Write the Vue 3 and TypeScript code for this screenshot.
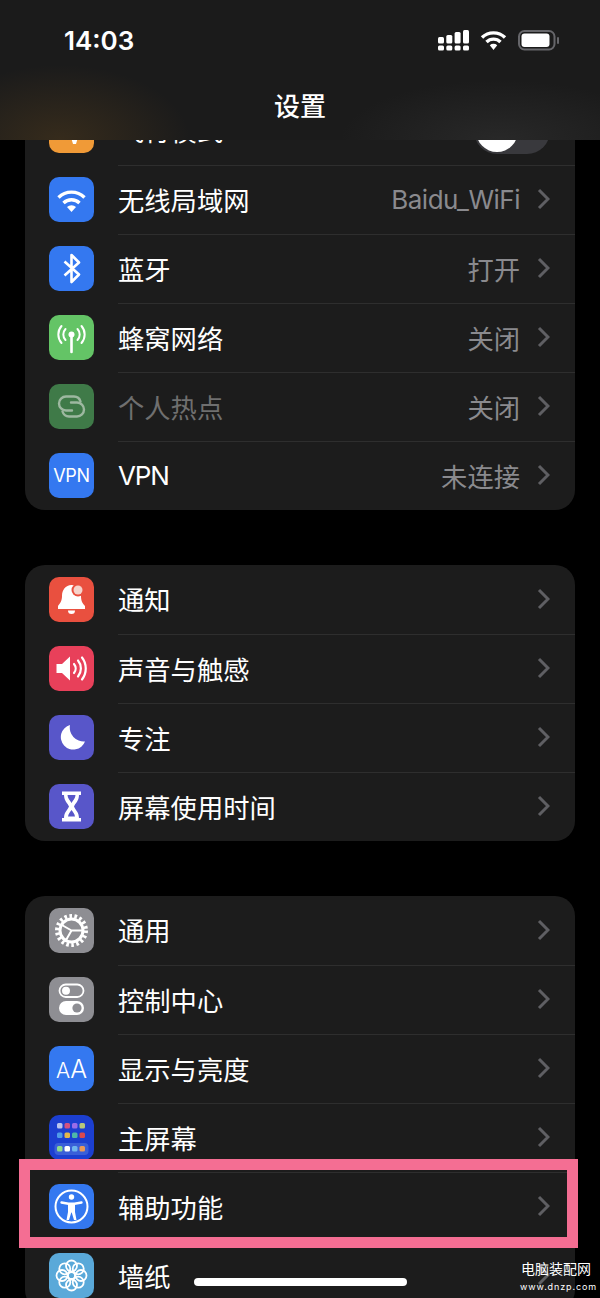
<script setup lang="ts">
interface Row {
  label: string;
  icon: string;
  color: string;
  value?: string;
  dim?: boolean;
  toggle?: boolean;
}

const groups: Row[][] = [
  [
    { label: '飞行模式', icon: 'plane', color: '#f09a37', toggle: true },
    { label: '无线局域网', icon: 'wifi', color: '#3478f0', value: 'Baidu_WiFi' },
    { label: '蓝牙', icon: 'bluetooth', color: '#3478f0', value: '打开' },
    { label: '蜂窝网络', icon: 'cell', color: '#64c466', value: '关闭' },
    { label: '个人热点', icon: 'hotspot', color: '#3f7a48', value: '关闭', dim: true },
    { label: 'VPN', icon: 'vpn', color: '#3478f0', value: '未连接' },
  ],
  [
    { label: '通知', icon: 'bell', color: '#e9503f' },
    { label: '声音与触感', icon: 'sound', color: '#e8405a' },
    { label: '专注', icon: 'moon', color: '#5856c9' },
    { label: '屏幕使用时间', icon: 'hourglass', color: '#5856c9' },
  ],
  [
    { label: '通用', icon: 'gear', color: '#8e8e93' },
    { label: '控制中心', icon: 'switches', color: '#8e8e93' },
    { label: '显示与亮度', icon: 'aa', color: '#3478f0' },
    { label: '主屏幕', icon: 'home', color: '#1c3fd0' },
    { label: '辅助功能', icon: 'access', color: '#3478f0' },
    { label: '墙纸', icon: 'flower', color: '#5aa9d9' },
  ],
];

const homeDots = [
  ['#b9c4ee', '#d2527f', '#9a6ce8', '#b7c77a'],
  ['#4f9be8', '#e2b64c', '#4fb7a8', '#d9494f'],
];
const dockDots = ['#8fdc8a', '#ffffff', '#6fb5ee', '#eb9a5a'];
const petals = [0, 45, 90, 135, 180, 225, 270, 315];

const isLatin = (text: string) => /^[A-Za-z_]+$/.test(text);
</script>

<template>
  <div class="page">
    <header class="nav">
      <div class="status">
        <span class="time">14:03</span>
        <div class="status-icons">
          <svg width="32" height="21" viewBox="0 0 32 21" fill="#fff">
            <rect x="1" y="7" width="6" height="6.500" rx="1.500" />
            <rect x="1" y="15.500" width="6" height="5" rx="1.500" />
            <rect x="9.300" y="5" width="6" height="8.500" rx="1.500" />
            <rect x="9.300" y="15.500" width="6" height="5" rx="1.500" />
            <rect x="17.600" y="2" width="6" height="11.500" rx="1.500" />
            <rect x="17.600" y="15.500" width="6" height="5" rx="1.500" />
            <rect x="26" y="0" width="6" height="13.500" rx="1.500" />
            <rect x="26" y="15.500" width="6" height="5" rx="1.500" />
          </svg>
          <svg width="27" height="21" viewBox="0 0 27 21">
            <path d="M2 7.500a16.500 16.500 0 0 1 23 0M6.500 12a10 10 0 0 1 14 0" fill="none" stroke="#fff" stroke-width="3.400" />
            <path d="M9.800 15.200a5.400 5.400 0 0 1 7.400 0L13.500 20z" fill="#fff" />
          </svg>
          <svg width="41" height="21" viewBox="0 0 41 21">
            <rect x="1" y="1" width="35.500" height="18.500" rx="5.500" fill="none" stroke="#66666a" stroke-width="2" />
            <rect x="3.500" y="3.500" width="28" height="13.500" rx="3" fill="#fff" />
            <rect x="39" y="7" width="2" height="7" rx="1" fill="#66666a" />
          </svg>
        </div>
      </div>
      <h1 class="title">设置</h1>
    </header>

    <main class="list">
      <section v-for="(group, g) in groups" :key="g" class="card">
        <div v-for="(row, i) in group" :key="row.label" class="row">
          <span class="icon" :style="{ background: row.color }">
            <svg v-if="row.icon !== 'vpn' && row.icon !== 'aa'" width="45" height="45" viewBox="0 0 45 45">
              <path v-if="row.icon === 'plane'" d="M24 10l-3 10-8-1-2-3-2 1 2 6-2 6 2 1 2-3 8-1 3 10h3l3-10 6-1v-4l-6-1-3-10z" fill="#fff" />

              <template v-else-if="row.icon === 'wifi'">
                <path d="M9.500 20.500a18.500 18.500 0 0 1 26 0M14.500 26a11.500 11.500 0 0 1 16 0" fill="none" stroke="#fff" stroke-width="3.400" />
                <path d="M18 30a6.500 6.500 0 0 1 9 0l-4.500 5z" fill="#fff" />
              </template>

              <path
                v-else-if="row.icon === 'bluetooth'"
                d="M15.500 15.500 L30 28.500 L22.500 36 V9 L30 16.500 L15.500 29.500"
                fill="none"
                stroke="#fff"
                stroke-width="2.600"
                stroke-linejoin="round"
              />

              <template v-else-if="row.icon === 'cell'">
                <circle cx="22.500" cy="19.500" r="3" fill="#fff" />
                <path d="M22.500 20v17" stroke="#fff" stroke-width="2.600" stroke-linecap="round" />
                <path
                  d="M16.500 14a8 8 0 0 0 0 11M28.500 14a8 8 0 0 1 0 11M12.500 11a13 13 0 0 0 0 17M32.500 11a13 13 0 0 1 0 17"
                  fill="none"
                  stroke="#fff"
                  stroke-width="2"
                  stroke-linecap="round"
                />
              </template>

              <g v-else-if="row.icon === 'hotspot'" fill="none" stroke="#9db8a0" stroke-width="2.400" stroke-linecap="round">
                <path d="M23 26.500h-6a7 7 0 0 1 0-14h8a7 7 0 0 1 6.500 5" />
                <path d="M22 18.500h6a7 7 0 0 1 0 14h-8a7 7 0 0 1-6.500-5" />
              </g>

              <template v-else-if="row.icon === 'bell'">
                <path d="M22.500 8c-6 0-9.500 5-9.500 11 0 5-2 7.500-4 10v3h27v-3c-2.500-2.500-4-5-4-10 0-6-3.500-11-9.500-11z" fill="#fff" />
                <path d="M19 33.500h7a3.500 3.500 0 0 1-7 0z" fill="#fff" />
                <circle cx="29" cy="13" r="6.500" fill="#e9503f" />
                <circle cx="29" cy="13" r="4.500" fill="#f6d3cb" />
              </template>

              <template v-else-if="row.icon === 'sound'">
                <path d="M7.500 18h5.500l8-7.500v24l-8-7.500h-5.500z" fill="#fff" />
                <path
                  d="M25 18a7 7 0 0 1 0 9M29 14.500a12.500 12.500 0 0 1 0 16M33 11.500a18 18 0 0 1 0 22"
                  fill="none"
                  stroke="#fff"
                  stroke-width="2.200"
                  stroke-linecap="round"
                />
              </template>

              <path
                v-else-if="row.icon === 'moon'"
                d="M21 10a12.500 12.500 0 1 0 15 16.500A14 14 0 0 1 21 10z"
                fill="#fff"
              />

              <template v-else-if="row.icon === 'hourglass'">
                <path d="M13 7.500h19v3.500h-2c0 6-4 8.500-5 11.500 1 3 5 5.500 5 11.500h2v3.500h-19v-3.500h2c0-6 4-8.500 5-11.500-1-3-5-5.500-5-11.500h-2z" fill="#fff" />
                <path d="M18.500 11h8c0 3-2.500 5.500-4 8-1.500-2.500-4-5-4-8z" fill="#5856c9" />
                <path d="M22.500 26c1.500 2 3 3.500 3.500 6.500h-7c.5-3 2-4.500 3.500-6.500z" fill="#5856c9" />
              </template>

              <g v-else-if="row.icon === 'gear'" fill="none" stroke="#fff">
                <circle cx="22.500" cy="22.500" r="14.500" stroke-width="4" stroke-dasharray="2.600 2.460" />
                <circle cx="22.500" cy="22.500" r="11.500" stroke-width="3" />
                <path d="M22.500 22.500H34M22.500 22.500L12 16.500M22.500 22.500L16.500 33" stroke-width="2" />
              </g>

              <template v-else-if="row.icon === 'switches'">
                <rect x="10.500" y="7.500" width="24" height="12.500" rx="6.250" fill="none" stroke="#fff" stroke-width="1.800" />
                <circle cx="17" cy="13.750" r="4" fill="#fff" />
                <rect x="10" y="24" width="25" height="14" rx="7" fill="#fff" />
                <circle cx="28" cy="31" r="4.600" fill="#8e8e93" />
              </template>

              <template v-else-if="row.icon === 'home'">
                <template v-for="(line, y) in homeDots" :key="y">
                  <rect
                    v-for="(dot, x) in line"
                    :key="x"
                    :x="8 + x * 7.500"
                    :y="8 + y * 9.500"
                    width="5.500"
                    height="5.500"
                    rx="1.500"
                    :fill="dot"
                  />
                </template>
                <rect x="5.500" y="28" width="34" height="12" rx="4" fill="#3a5fd8" />
                <rect
                  v-for="(dot, x) in dockDots"
                  :key="x"
                  :x="8 + x * 7.500"
                  y="31"
                  width="5.500"
                  height="5.500"
                  rx="1.500"
                  :fill="dot"
                />
              </template>

              <template v-else-if="row.icon === 'access'">
                <circle cx="22.500" cy="22.500" r="16" fill="none" stroke="#fff" stroke-width="2" />
                <circle cx="22.500" cy="13" r="2.700" fill="#fff" />
                <path d="M12.500 18.500l7 1.300h6l7-1.300" fill="none" stroke="#fff" stroke-width="2.400" stroke-linecap="round" />
                <path d="M19 19.500h7v8.500l1.500 8h-2.500l-2.300-7.500h-.4l-2.300 7.500h-2.500l1.500-8z" fill="#fff" />
              </template>

              <g v-else-if="row.icon === 'flower'" fill="none" stroke="#fff" stroke-width="1.800">
                <circle
                  v-for="deg in petals"
                  :key="deg"
                  cx="22.500"
                  cy="13"
                  r="5.500"
                  :transform="`rotate(${deg} 22.500 22.500)`"
                />
                <circle cx="22.500" cy="22.500" r="3.500" />
              </g>
            </svg>
            <span v-else-if="row.icon === 'vpn'" class="icon-vpn">VPN</span>
            <span v-else class="icon-aa"><small>A</small>A</span>
          </span>
          <div class="body" :class="{ first: i === 0 }">
            <span class="label" :class="{ dim: row.dim, latin: isLatin(row.label) }">{{ row.label }}</span>
            <span v-if="row.value" class="value" :class="{ latin: isLatin(row.value) }">{{ row.value }}</span>
            <span v-if="row.toggle" class="toggle"><i></i></span>
            <svg v-else class="chevron" width="13" height="22" viewBox="0 0 13 22">
              <path d="M2 2l9 9-9 9" fill="none" stroke="#5f5f63" stroke-width="3" />
            </svg>
          </div>
        </div>
      </section>
    </main>

    <div class="highlight"></div>
    <div class="home-bar"></div>
    <div class="watermark">
      <strong>电脑装配网</strong>
      <span>www.dnzp.com</span>
    </div>
  </div>
</template>

<style>
html,
body {
  background: #000;
}
</style>

<style scoped>
.page {
  position: relative;
  width: 600px;
  height: 1298px;
  overflow: hidden;
  background: #000;
  color: #fff;
  font-family: Inter, "Noto Sans CJK SC", sans-serif;
}

.nav {
  position: absolute;
  top: 0;
  left: 0;
  right: 0;
  z-index: 2;
  height: 140px;
  background:
    radial-gradient(ellipse 130px 75px at 60px 140px, rgba(140, 95, 30, 0.24), transparent),
    radial-gradient(ellipse 160px 60px at 500px 140px, rgba(80, 80, 80, 0.25), transparent),
    #1b1b1b;
}

.status {
  display: flex;
  justify-content: space-between;
  align-items: center;
  height: 80px;
  padding: 0 41px 0 64px;
}

.time {
  font-size: 26px;
  font-weight: 600;
}

.status-icons {
  display: flex;
  align-items: center;
  gap: 11px;
}

.title {
  margin: 0;
  font-size: 26px;
  font-weight: 500;
  line-height: 54px;
  text-align: center;
}

.list {
  display: flex;
  flex-direction: column;
  gap: 55px;
  padding: 96px 25px 0;
}

.card {
  border-radius: 20px;
  background: #1c1c1c;
  overflow: hidden;
}

.row {
  display: flex;
  align-items: center;
  gap: 24px;
  height: 69px;
  padding-left: 24px;
}

.icon {
  flex: none;
  display: flex;
  align-items: center;
  justify-content: center;
  width: 45px;
  height: 45px;
  border-radius: 10px;
  overflow: hidden;
}

.icon svg {
  display: block;
}

.icon-vpn {
  font-size: 18px;
  letter-spacing: -0.3px;
}

.icon-aa {
  font-size: 25px;
  font-weight: 300;
}

.icon-aa small {
  font-size: 21px;
}

.body {
  flex: 1;
  align-self: stretch;
  display: flex;
  align-items: center;
  padding: 0 25px 2px 0;
  border-top: 1px solid #2e2e2e;
}

.body.first {
  border-top: 0;
}

.label {
  flex: 1;
  font-size: 26.3px;
}

.label.dim {
  color: #6f6f6f;
}

.label.latin {
  font-size: 26px;
  letter-spacing: -1.2px;
}

.value {
  margin-right: 17px;
  font-size: 26.3px;
  color: #8a8a8e;
}

.value.latin {
  font-size: 26px;
  letter-spacing: -0.5px;
}

.chevron {
  flex: none;
}

.toggle {
  position: relative;
  width: 76px;
  height: 46px;
  margin-top: 2px;
  border-radius: 23px;
  background: #39393d;
}

.toggle i {
  position: absolute;
  top: 2px;
  left: 2px;
  width: 42px;
  height: 42px;
  border-radius: 50%;
  background: #fff;
}

.highlight {
  position: absolute;
  top: 1159px;
  left: 19px;
  width: 537px;
  height: 67px;
  border: 11px solid #f46e93;
}

.home-bar {
  position: absolute;
  top: 1278px;
  left: 194px;
  width: 213px;
  height: 8px;
  border-radius: 4px;
  background: #fff;
}

.watermark {
  position: absolute;
  top: 1259px;
  left: 520px;
  display: flex;
  flex-direction: column;
  width: 72px;
  text-align: center;
}

.watermark strong {
  font-size: 14px;
  font-weight: 400;
  line-height: 20px;
}

.watermark span {
  font-size: 9px;
  letter-spacing: 0.9px;
  line-height: 15px;
  white-space: nowrap;
}
</style>
